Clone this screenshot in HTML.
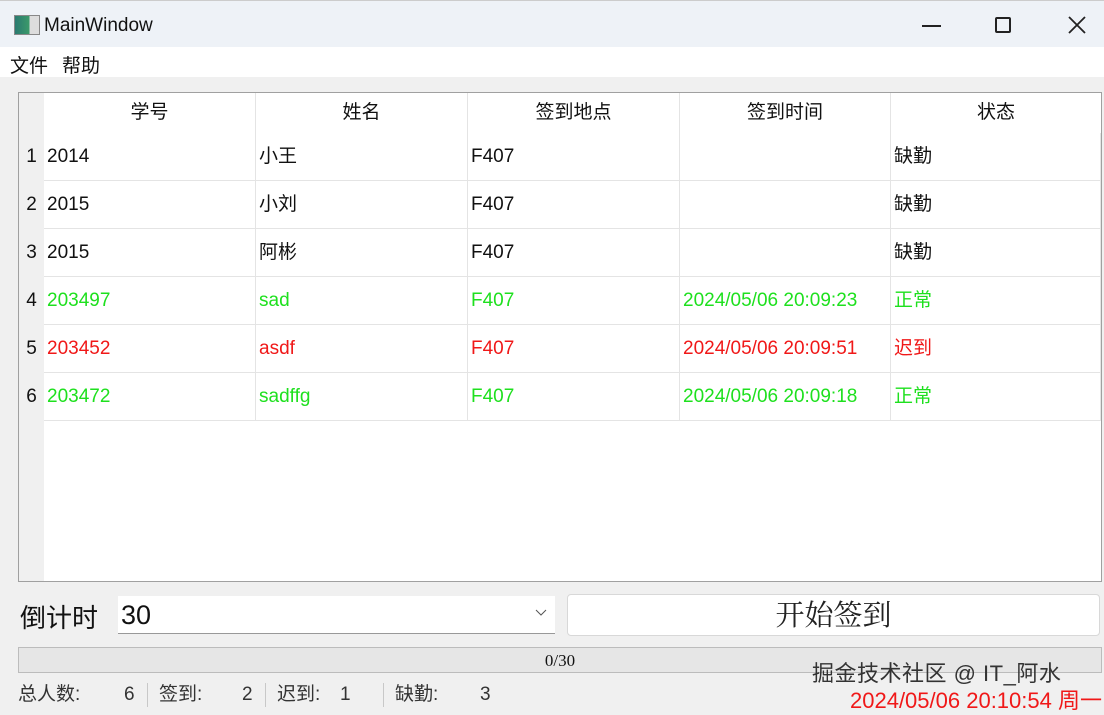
<!DOCTYPE html>
<html><head><meta charset="utf-8"><style>
*{margin:0;padding:0;box-sizing:border-box}
body{width:1104px;height:707px;overflow:hidden;background:#f0f0f0;font-family:"Liberation Sans","Noto Sans CJK SC",sans-serif;position:relative;color:#111}
.a{position:absolute}
.title{left:0;top:0;width:1104px;height:47px;background:#eef2f7;border-top:1px solid #ccc}
.menu{left:0;top:47px;width:1104px;height:30px;background:#fff;font-size:19px}
.tbl{left:18px;top:92px;width:1084px;height:490px;background:#fff;border:1px solid #a0a0a0}
.vh{left:0;top:0;width:25px;height:488px;background:#f0f0f0}
.cell{position:absolute;font-size:19px;line-height:48px;height:48px;border-right:1px solid #e4e4e4;border-bottom:1px solid #e4e4e4;padding-left:3px;white-space:nowrap}
.hd{position:absolute;top:0;height:40px;line-height:40px;text-align:center;font-size:19px;border-right:1px solid #e4e4e4;background:#fff}
.rn{position:absolute;left:0;width:25px;text-align:center;font-size:19px;line-height:48px;height:48px}
.g{color:#1ee01e}.r{color:#f01818}
.st{position:absolute;top:683px;height:24px;line-height:24px;font-size:19px;color:#333;white-space:nowrap}
.dv{position:absolute;top:683px;width:1px;height:24px;background:#c8c8c8}
</style></head><body>
<div class="a title">
 <div class="a" style="left:14px;top:14px;width:26px;height:20px;background:linear-gradient(90deg,#2a7a70 0,#3c9a6a 60%,#ddd 60%);border:1px solid #888"></div>
 <div class="a" style="left:44px;top:14px;font-size:19px">MainWindow</div>
 <div class="a" style="left:922px;top:24px;width:19px;height:2px;background:#222"></div>
 <div class="a" style="left:995px;top:16px;width:16px;height:16px;border:2px solid #222;border-radius:2px"></div>
 <svg class="a" style="left:1068px;top:15px" width="18" height="18"><path d="M1 1L17 17M17 1L1 17" stroke="#222" stroke-width="1.8"/></svg>
</div>
<div class="a menu"><span class="a" style="left:10px;top:4px">文件</span><span class="a" style="left:62px;top:4px">帮助</span></div>
<div class="a tbl">
 <div class="a vh"></div>
 <div class="hd" style="left:25px;width:212px">学号</div>
 <div class="hd" style="left:237px;width:212px">姓名</div>
 <div class="hd" style="left:449px;width:212px">签到地点</div>
 <div class="hd" style="left:661px;width:211px">签到时间</div>
 <div class="hd" style="left:872px;width:210px;border-right:none">状态</div>
 <div id="rows"></div>
</div>
<script>
var d=[["2014","小王","F407","","缺勤",""],["2015","小刘","F407","","缺勤",""],["2015","阿彬","F407","","缺勤",""],["203497","sad","F407","2024/05/06 20:09:23","正常","g"],["203452","asdf","F407","2024/05/06 20:09:51","迟到","r"],["203472","sadffg","F407","2024/05/06 20:09:18","正常","g"]];
var L=[25,237,449,661,872],W=[212,212,212,211,210],h="";
d.forEach(function(r,i){var t=40+i*48;h+='<div class="rn" style="top:'+t+'px">'+(i+1)+'</div>';
for(var j=0;j<5;j++)h+='<div class="cell '+r[5]+'" style="left:'+L[j]+'px;top:'+t+'px;width:'+W[j]+'px">'+r[j]+'</div>';});
document.getElementById("rows").innerHTML=h;
</script>
<div class="a" style="left:20px;top:598px;font-size:26px">倒计时</div>
<div class="a" style="left:118px;top:596px;width:437px;height:38px;background:#fff;border-bottom:1px solid #999;font-size:27px;line-height:38px;padding-left:3px">30</div>
<svg class="a" style="left:535px;top:609px" width="12" height="8"><path d="M1 1L6 6L11 1" stroke="#555" fill="none"/></svg>
<div class="a" style="left:567px;top:594px;width:533px;height:42px;background:#fff;border:1px solid #d8d8d8;border-radius:4px;text-align:center;font-family:'Liberation Serif','Noto Serif CJK SC',serif;font-size:29px;line-height:42px;color:#222">开始签到</div>
<div class="a" style="left:18px;top:647px;width:1084px;height:26px;background:#e6e6e6;border:1px solid #bcbcbc;text-align:center;font-family:'Liberation Serif',serif;font-size:17px;line-height:26px">0/30</div>
<span class="st" style="left:18px">总人数:</span><span class="st" style="left:124px">6</span><div class="dv" style="left:147px"></div>
<span class="st" style="left:159px">签到:</span><span class="st" style="left:242px">2</span><div class="dv" style="left:265px"></div>
<span class="st" style="left:277px">迟到:</span><span class="st" style="left:340px">1</span><div class="dv" style="left:383px"></div>
<span class="st" style="left:395px">缺勤:</span><span class="st" style="left:480px">3</span>
<div class="a" style="left:812px;top:656px;font-size:22px;letter-spacing:0.5px;color:#333;white-space:nowrap">掘金技术社区 @ IT_阿水</div>
<div class="a" style="left:850px;top:683px;font-size:22px;color:#f01818;white-space:nowrap">2024/05/06 20:10:54 周一</div>
</body></html>
